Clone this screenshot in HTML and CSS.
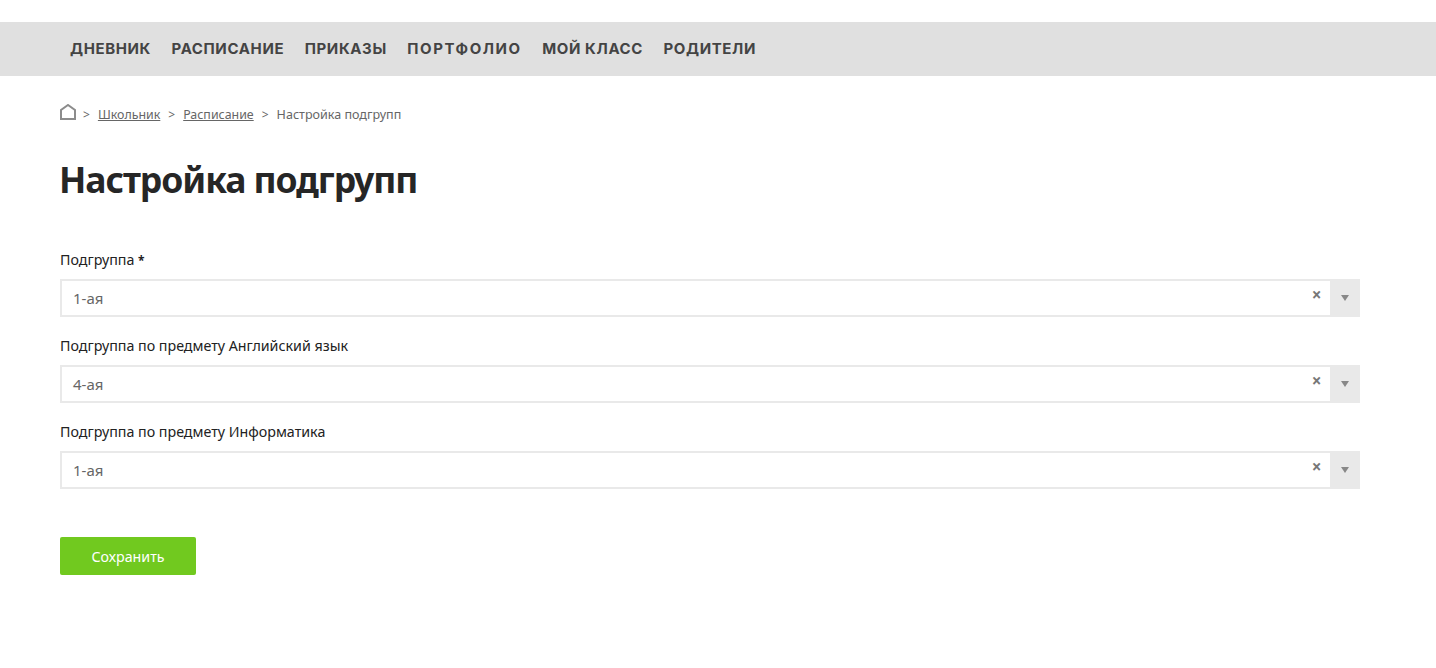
FILE: index.html
```html
<!DOCTYPE html>
<html lang="ru">
<head>
<meta charset="utf-8">
<title>Настройка подгрупп</title>
<link rel="stylesheet" href="styles.css">
</head>
<body>
<nav class="topnav">
  <a class="nav-link">Дневник</a>
  <a class="nav-link">Расписание</a>
  <a class="nav-link">Приказы</a>
  <a class="nav-link nav-wide">Портфолио</a>
  <a class="nav-link">Мой класс</a>
  <a class="nav-link">Родители</a>
</nav>
<main class="content">
  <div class="crumbs">
    <svg class="home" width="16" height="16" viewBox="0 0 16 16"><path d="M1 15V6l7-5 7 5v9z" fill="none" stroke="#8c8c8c" stroke-width="2"/></svg>
    <span class="sep">&gt;</span>
    <a class="crumb-link">Школьник</a>
    <span class="sep">&gt;</span>
    <a class="crumb-link">Расписание</a>
    <span class="sep">&gt;</span>
    <span class="crumb-current">Настройка подгрупп</span>
  </div>
  <h1 class="title">Настройка подгрупп</h1>
  <form class="form">
    <div class="field">
      <div class="label">Подгруппа <b class="req">*</b></div>
      <div class="select"><span class="value">1-ая</span><span class="clear">×</span><span class="arrow"><i class="tri"></i></span></div>
    </div>
    <div class="field">
      <div class="label">Подгруппа по предмету Английский язык</div>
      <div class="select"><span class="value">4-ая</span><span class="clear">×</span><span class="arrow"><i class="tri"></i></span></div>
    </div>
    <div class="field">
      <div class="label">Подгруппа по предмету Информатика</div>
      <div class="select"><span class="value">1-ая</span><span class="clear">×</span><span class="arrow"><i class="tri"></i></span></div>
    </div>
    <button class="save" type="button">Сохранить</button>
  </form>
</main>
</body>
</html>
```
FILE: styles.css
```css
* { box-sizing: border-box; }
html, body { margin: 0; padding: 0; background: #fff; }
body { font-family: "Noto Sans", "Open Sans", sans-serif; color: #222; height: 668px; overflow: hidden; }
.topnav { margin-top: 22px; height: 54px; background: #e0e0e0; padding: 0 0 2px 70px; display: flex; align-items: center; gap: 20.5px; }
.nav-link { font-family: "Inter", "Liberation Sans", sans-serif; font-weight: 700; font-size: 15px; letter-spacing: 0.62px; text-transform: uppercase; color: #444; }
.nav-wide { letter-spacing: 1.55px; }
.content { padding: 0 76px 0 60px; }
.crumbs { margin-top: 28px; height: 20px; display: flex; align-items: center; font-size: 12.4px; color: #666; }
.home { margin-right: 7px; margin-top: -4px; }
.sep { margin: 0 8px 0 0; font-size: 12px; color: #666; }
.crumb-link { color: #666; text-decoration: underline; margin-right: 8px; }
.crumb-current { font-size: 12.55px; }
.title { margin: 30px 0 0 -1px; font-size: 35.5px; line-height: 50px; font-weight: 700; color: #262626; letter-spacing: -1.05px; }
.form { margin-top: 46px; }
.field { margin-bottom: 19px; }
.label { height: 29px; font-size: 14.25px; line-height: 20px; color: #222; }
.req { font-weight: 700; font-size: 12px; }
.select { height: 38px; border: 2px solid #e9e9e9; display: flex; align-items: center; position: relative; background: #fff; }
.value { flex: 1; padding-left: 11px; font-size: 15px; color: #666; }
.clear { position: absolute; right: 36.5px; top: 5px; font-size: 17px; font-weight: 700; line-height: 18px; color: #777; }
.arrow { width: 30px; height: 38px; margin-right: -2px; background: #e9e9e9; display: flex; align-items: center; justify-content: center; }
.tri { display: block; width: 0; height: 0; border-left: 4px solid transparent; border-right: 4px solid transparent; border-top: 6px solid #888; }
.save { display: block; margin-top: 48px; width: 136px; height: 38px; border: 0; border-radius: 2px; background: #71c91f; color: #fff; font-family: inherit; font-size: 14.25px; padding: 0; }
```
